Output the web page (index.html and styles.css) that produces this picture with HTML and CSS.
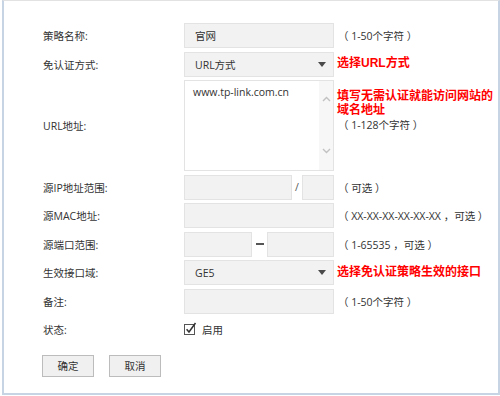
FILE: index.html
```html
<!DOCTYPE html>
<html lang="zh-CN">
<head>
<meta charset="utf-8">
<title>免认证策略</title>
<link rel="stylesheet" href="styles.css">
</head>
<body>
<div class="frame">
  <form class="form">
    <div class="row">
      <div class="label">策略名称:</div>
      <div class="field"><span class="value">官网</span></div>
      <div class="hint">（ 1-50个字符 ）</div>
    </div>
    <div class="row">
      <div class="label">免认证方式:</div>
      <div class="field select"><span class="value">URL方式</span>
        <svg class="caret" width="8" height="5" viewBox="0 0 8 5"><path d="M0 0H8L4 5Z" fill="#4a4a4a"/></svg>
      </div>
      <div class="note">选择URL方式</div>
    </div>
    <div class="row row-tall">
      <div class="label">URL地址:</div>
      <div class="textarea">
        <div class="ta-text">www.tp-link.com.cn</div>
        <div class="scroll">
          <svg width="9" height="6" viewBox="0 0 9 6"><path d="M1 5L4.5 1.5L8 5" fill="none" stroke="#c2c2c2" stroke-width="1.4"/></svg>
          <svg width="9" height="6" viewBox="0 0 9 6"><path d="M1 1L4.5 4.5L8 1" fill="none" stroke="#c2c2c2" stroke-width="1.4"/></svg>
        </div>
      </div>
      <div class="hint-block">
        <div class="note">填写无需认证就能访问网站的</div>
        <div class="note">域名地址</div>
        <div class="hint sub">（ 1-128个字符 ）</div>
      </div>
    </div>
    <div class="row">
      <div class="label">源IP地址范围:</div>
      <div class="split">
        <div class="field ip-a"></div>
        <span class="sep">/</span>
        <div class="field ip-b"></div>
      </div>
      <div class="hint">（ 可选 ）</div>
    </div>
    <div class="row">
      <div class="label">源MAC地址:</div>
      <div class="field"></div>
      <div class="hint">（ XX-XX-XX-XX-XX-XX ，可选 ）</div>
    </div>
    <div class="row">
      <div class="label">源端口范围:</div>
      <div class="split">
        <div class="field port-a"></div>
        <span class="dash"></span>
        <div class="field port-b"></div>
      </div>
      <div class="hint">（ 1-65535 ，可选 ）</div>
    </div>
    <div class="row">
      <div class="label">生效接口域:</div>
      <div class="field select"><span class="value">GE5</span>
        <svg class="caret" width="8" height="5" viewBox="0 0 8 5"><path d="M0 0H8L4 5Z" fill="#4a4a4a"/></svg>
      </div>
      <div class="note">选择免认证策略生效的接口</div>
    </div>
    <div class="row">
      <div class="label">备注:</div>
      <div class="field"></div>
      <div class="hint">（ 1-50个字符 ）</div>
    </div>
    <div class="row">
      <div class="label">状态:</div>
      <div class="check">
        <svg class="box" width="13" height="13" viewBox="0 0 13 13">
          <rect x="0.5" y="2.5" width="10" height="10" fill="#fff" stroke="#555"/>
          <path d="M2.6 7.2L5 10L11.5 1" fill="none" stroke="#333" stroke-width="1.5"/>
        </svg>
        <span>启用</span>
      </div>
      <div></div>
    </div>
    <div class="buttons">
      <button type="button" class="btn">确定</button>
      <button type="button" class="btn">取消</button>
    </div>
  </form>
</div>
</body>
</html>
```

FILE: styles.css
```css
html, body {
  margin: 0;
  padding: 0;
  background: #fff;
}

body {
  font-family: "Open Sans", "Noto Sans CJK SC", sans-serif;
  font-size: 10.5px;
  color: #333;
}

.frame {
  margin-left: 2px;
  width: 498px;
  height: 395px;
  box-sizing: border-box;
  border-top: 1px solid #e2e2e2;
  border-left: 2px solid #c6d4e4;
  border-right: 2px solid #c6d4e4;
  border-bottom: 2px solid #c6d4e4;
  padding: 22px 0 0 39px;
}

.form {
  display: flex;
  flex-direction: column;
  gap: 3.5px;
}

.row {
  display: grid;
  grid-template-columns: 141px 150px auto;
  align-items: center;
  min-height: 25px;
}

.label {
  white-space: nowrap;
  color: #333;
}

.field {
  height: 25px;
  box-sizing: border-box;
  background: #f2f2f2;
  border: 1px solid #e3e3e3;
  display: flex;
  align-items: center;
  padding-left: 10px;
}

.select {
  justify-content: space-between;
  padding-right: 7px;
}

.caret {
  display: block;
}

.hint {
  padding-left: 4px;
  white-space: nowrap;
  color: #333;
}

.note {
  padding-left: 3px;
  color: #ff0000;
  font-family: "Liberation Sans", "Noto Sans CJK SC", sans-serif;
  font-size: 12px;
  font-weight: bold;
  line-height: 13.5px;
  white-space: nowrap;
}

.textarea {
  height: 91px;
  box-sizing: border-box;
  border: 1px solid #e3e3e3;
  background: #fff;
  display: flex;
}

.ta-text {
  flex: 1;
  padding: 5px 0 0 8px;
  line-height: 13px;
  color: #333;
}

.scroll {
  width: 14px;
  background: #f7f7f7;
  display: flex;
  flex-direction: column;
  justify-content: space-between;
  align-items: center;
  padding: 15px 0 16px;
}

.scroll svg {
  display: block;
}

.hint-block {
  align-self: start;
  padding-top: 10px;
}

.hint-block .sub {
  margin-top: 2px;
  line-height: 12px;
}

.split {
  display: flex;
  align-items: center;
}

.ip-a { width: 108px; }
.ip-b { width: 32px; }
.port-a { width: 68px; }
.port-b { width: 67px; }

.sep {
  width: 10px;
  text-align: center;
  color: #555;
}

.dash {
  width: 15px;
  display: flex;
  justify-content: center;
}

.dash::before {
  content: "";
  display: block;
  width: 8px;
  height: 1.5px;
  background: #555;
}

.check {
  display: flex;
  align-items: center;
  gap: 5px;
}

.check .box {
  display: block;
  margin-top: -3px;
}

.buttons {
  display: flex;
  gap: 15px;
  margin-top: 9px;
  margin-left: -1px;
}

.btn {
  width: 52px;
  height: 22px;
  box-sizing: border-box;
  border: 1px solid #bcbcbc;
  background: #f0f0f0;
  font-family: "Open Sans", "Noto Sans CJK SC", sans-serif;
  font-size: 10.5px;
  color: #333;
  padding: 0;
}
```
